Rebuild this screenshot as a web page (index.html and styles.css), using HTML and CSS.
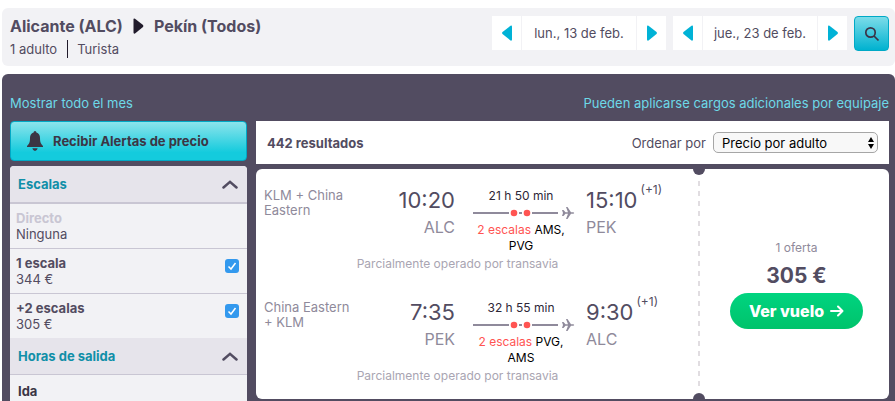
FILE: index.html
```html
<!DOCTYPE html>
<html lang="es">
<head>
<meta charset="utf-8">
<meta name="viewport" content="width=device-width, initial-scale=1">
<title>Alicante (ALC) – Pekín (Todos)</title>
<link rel="stylesheet" href="styles.css">
</head>
<body>
<header class="search">
  <div class="route">
    <h1 class="route-title">Alicante (ALC)
      <svg class="route-arrow" viewBox="0 0 10 16" aria-hidden="true"><path d="M0 1.5Q0 0 1.5 .8L9.5 7Q10.3 8 9.5 9L1.5 15.5Q0 16 0 14.5Z"/></svg>
      Pekín (Todos)</h1>
    <p class="route-info"><span>1 adulto</span><span class="cabin">Turista</span></p>
  </div>
  <div class="dates">
    <div class="date">
      <button class="step" type="button" aria-label="Día anterior"><svg viewBox="0 0 10 16"><path d="M10 1.5Q10 0 8.5 .8L.5 7Q-.3 8 .5 9L8.5 15.5Q10 16 10 14.5Z"/></svg></button>
      <button class="day" type="button">lun., 13 de feb.</button>
      <button class="step" type="button" aria-label="Día siguiente"><svg viewBox="0 0 10 16"><path d="M0 1.5Q0 0 1.5 .8L9.5 7Q10.3 8 9.5 9L1.5 15.5Q0 16 0 14.5Z"/></svg></button>
    </div>
    <div class="date">
      <button class="step" type="button" aria-label="Día anterior"><svg viewBox="0 0 10 16"><path d="M10 1.5Q10 0 8.5 .8L.5 7Q-.3 8 .5 9L8.5 15.5Q10 16 10 14.5Z"/></svg></button>
      <button class="day" type="button">jue., 23 de feb.</button>
      <button class="step" type="button" aria-label="Día siguiente"><svg viewBox="0 0 10 16"><path d="M0 1.5Q0 0 1.5 .8L9.5 7Q10.3 8 9.5 9L1.5 15.5Q0 16 0 14.5Z"/></svg></button>
    </div>
    <button class="find" type="button" aria-label="Buscar"><svg viewBox="0 0 16 16"><circle cx="6.5" cy="6.5" r="4.7"/><path d="M10 10L14.500 14.500"/></svg></button>
  </div>
</header>

<main class="page">
  <nav class="links">
    <a href="#mes">Mostrar todo el mes</a>
    <a href="#equipaje">Pueden aplicarse cargos adicionales por equipaje</a>
  </nav>
  <div class="columns">
    <aside class="sidebar">
      <button class="alerts" type="button">
        <svg viewBox="0 0 18 20" aria-hidden="true"><path d="M9 0Q10.400 0 10.400 1.600Q14 2.700 14 7C14 11.500 15 13.200 17 15V16H1V15C3 13.200 4 11.500 4 7Q4 2.700 7.600 1.600Q7.600 0 9 0Z"/><path d="M6.300 17.300H11.700Q11 20 9 20Q7 20 6.300 17.300Z"/></svg>
        Recibir Alertas de precio
      </button>
      <div class="filters">
        <button class="filter-head" type="button">Escalas <svg viewBox="0 0 16 9" aria-hidden="true"><path d="M1.500 7.500L8 1.800L14.500 7.500"/></svg></button>
        <div class="option"><div><b class="off">Directo</b><span>Ninguna</span></div></div>
        <label class="option" for="one"><span class="text"><b>1 escala</b><span>344 €</span></span><input id="one" type="checkbox" checked></label>
        <label class="option" for="two"><span class="text"><b>+2 escalas</b><span>305 €</span></span><input id="two" type="checkbox" checked></label>
        <button class="filter-head" type="button">Horas de salida <svg viewBox="0 0 16 9" aria-hidden="true"><path d="M1.500 7.500L8 1.800L14.500 7.500"/></svg></button>
        <h3 class="leg-name">Ida</h3>
      </div>
    </aside>

    <section class="results">
      <div class="toolbar">
        <strong>442 resultados</strong>
        <div class="sort">
          <label for="sort">Ordenar por</label>
          <div class="select">
            <select id="sort"><option>Precio por adulto</option></select>
            <svg viewBox="0 0 6 12" aria-hidden="true"><path d="M3 0L6 5H0ZM0 7H6L3 12Z"/></svg>
          </div>
        </div>
      </div>

      <article class="card">
        <div class="legs">
          <div class="leg">
            <div class="leg-main">
              <p class="airline">KLM + China Eastern</p>
              <p class="depart"><time>10:20</time><span>ALC</span></p>
              <div class="trip">
                <p class="duration">21 h 50 min</p>
                <svg class="track" viewBox="0 0 102 16" aria-hidden="true"><path class="line" d="M0 8H36M46 8H49M59 8H85"/><circle cx="41" cy="8" r="3.300"/><circle cx="54" cy="8" r="3.300"/><path class="plane" d="M89 5H90.500L92.500 7.200H95L93 2H94.500L98 7.200H100.500Q102 8 100.500 8.800H98L94.500 14H93L95 8.800H92.500L90.500 11H89L90 8Z"/></svg>
                <p class="stops"><span>2 escalas</span> AMS, PVG</p>
              </div>
              <p class="arrive"><time>15:10<sup>(+1)</sup></time><span>PEK</span></p>
            </div>
            <p class="operator">Parcialmente operado por transavia</p>
          </div>
          <div class="leg">
            <div class="leg-main">
              <p class="airline">China Eastern + KLM</p>
              <p class="depart"><time>7:35</time><span>PEK</span></p>
              <div class="trip">
                <p class="duration">32 h 55 min</p>
                <svg class="track" viewBox="0 0 102 16" aria-hidden="true"><path class="line" d="M0 8H36M46 8H49M59 8H85"/><circle cx="41" cy="8" r="3.300"/><circle cx="54" cy="8" r="3.300"/><path class="plane" d="M89 5H90.500L92.500 7.200H95L93 2H94.500L98 7.200H100.500Q102 8 100.500 8.800H98L94.500 14H93L95 8.800H92.500L90.500 11H89L90 8Z"/></svg>
                <p class="stops"><span>2 escalas</span> PVG, AMS</p>
              </div>
              <p class="arrive"><time>9:30<sup>(+1)</sup></time><span>ALC</span></p>
            </div>
            <p class="operator">Parcialmente operado por transavia</p>
          </div>
        </div>
        <div class="offer">
          <p class="count">1 oferta</p>
          <p class="price">305 €</p>
          <a class="go" href="#vuelo">Ver vuelo <svg viewBox="0 0 14 12" aria-hidden="true"><path d="M1 6H12.500M8 1.500L12.500 6L8 10.500"/></svg></a>
        </div>
      </article>
    </section>
  </div>
</main>
</body>
</html>
```
FILE: styles.css
```css
* { box-sizing: border-box; }

body {
  margin: 0;
  padding: 8px 0 0 2px;
  min-height: 100vh;
  display: flex;
  flex-direction: column;
  gap: 8px;
  background: #fff;
  color: #524c61;
  font: 13px/16px Inter, "Liberation Sans", sans-serif;
}

h1, h3, p { margin: 0; }
button, select { font: inherit; color: inherit; border: 0; margin: 0; padding: 0; }
button { cursor: pointer; }
svg { display: block; flex: none; }

/* Search summary */
.search {
  display: flex;
  justify-content: space-between;
  padding: 8px 6px 8px 8px;
  border-radius: 6px;
  background: #f2f2f5;
}
.route-title {
  display: flex;
  align-items: center;
  gap: 10px;
  font-size: 16px;
  line-height: 20px;
  font-weight: 700;
}
.route-arrow { width: 11px; height: 16px; fill: #211b2b; }
.route-info { display: flex; margin-top: 4px; line-height: 18px; }
.cabin { margin-left: 10px; padding-left: 9px; border-left: 1px solid #211b2b; }

.dates { display: flex; gap: 7px; }
.date { display: flex; gap: 1px; height: 34px; }
.step, .day { background: #fff; }
.step { display: grid; place-items: center; width: 29px; }
.step svg { width: 10px; height: 16px; fill: #00b2d6; }
.day { width: 114px; }
.find {
  display: grid;
  place-items: center;
  width: 35px;
  height: 35px;
  border: 1px solid #00a9c6;
  border-radius: 4px;
  background: linear-gradient(#7cdce9, #00b2d0);
}
.find svg { width: 16px; height: 16px; fill: none; stroke: #3b3347; stroke-width: 1.700; }

/* Results page */
.page {
  flex: 1;
  padding: 21px 6px 0 8px;
  border-radius: 6px 6px 0 0;
  background: #524c61;
}
.links { display: flex; justify-content: space-between; margin-bottom: 10px; }
.links a { color: #6dd9e8; text-decoration: none; }
.columns { display: grid; grid-template-columns: 237px 1fr; gap: 9px; }

/* Sidebar */
.sidebar { display: flex; flex-direction: column; }
.alerts {
  display: flex;
  align-items: center;
  gap: 9px;
  width: 100%;
  height: 40px;
  padding-left: 15px;
  border: 1px solid #00a9c6;
  border-radius: 4px;
  background: linear-gradient(#8ce4ec, #14cbdd 80%);
  color: #3b3645;
  font-weight: 700;
}
.alerts svg { width: 18px; height: 20px; fill: #3b3645; }
.filters { flex: 1; margin-top: 5px; border-radius: 4px 4px 0 0; background: #f2f2f5; overflow: hidden; }
.filter-head {
  display: flex;
  align-items: center;
  justify-content: space-between;
  width: 100%;
  height: 38px;
  padding: 0 9px 0 8px;
  border-bottom: 2px solid #c9c6d3;
  background: #e6e4eb;
  color: #108fa8;
  font-weight: 700;
}
.option + .filter-head { height: 37px; border-bottom-width: 1px; }
.filter-head svg { width: 16px; height: 9px; fill: none; stroke: #524c61; stroke-width: 2.500; stroke-linecap: round; }
.option {
  display: flex;
  justify-content: space-between;
  padding: 6px 8px 6px 6px;
}
.option + .option { border-top: 1px solid #c9c6d3; }
.option b, .option b + span { display: block; }
.option b { font-weight: 700; }
.option .off { color: #c9c6d3; }
.option input {
  appearance: none;
  width: 14px;
  height: 14px;
  margin: 4px 0 0;
  border-radius: 3px;
  background: #3399ee url("data:image/svg+xml,%3Csvg xmlns='http://www.w3.org/2000/svg' viewBox='0 0 14 14'%3E%3Cpath d='M3.500 7.500L6 10L10.500 4' fill='none' stroke='white' stroke-width='1.500'/%3E%3C/svg%3E");
}
.leg-name { padding: 8px 8px 0; font-size: 13px; font-weight: 700; color: #3b3645; }

/* Toolbar */
.results { margin-bottom: 2px; }
.toolbar {
  display: flex;
  align-items: center;
  justify-content: space-between;
  height: 43px;
  padding: 0 11px;
  background: #fff;
}
.toolbar strong { font-weight: 700; }
.sort { display: flex; align-items: center; gap: 7px; }
.select { display: grid; align-items: center; }
.select select, .select svg { grid-area: 1 / 1; }
.select select {
  appearance: none;
  width: 165px;
  height: 21px;
  padding: 0 8px;
  border: 1px solid #a6a6a6;
  border-radius: 5px;
  background: #f8f8f8;
  color: #000;
}
.select svg { justify-self: end; width: 6px; height: 12px; margin-right: 4px; pointer-events: none; }

/* Ticket */
.card {
  position: relative;
  display: grid;
  grid-template-columns: 1fr 190px;
  margin-top: 5px;
  border-radius: 6px;
  background: #fff;
}
.legs { display: grid; gap: 28px; padding: 19px 8px 15px; }
.leg-main { display: grid; grid-template-columns: 97px 94px 102px 1fr; }
.airline { padding-right: 8px; color: #8f8a9b; line-height: 15px; }
.depart { text-align: right; }
.depart time, .arrive time { display: block; font-size: 22px; line-height: 24px; }
.depart span, .arrive span { color: #8f8a9b; font-size: 16px; line-height: 30px; }
.trip { margin: 0 -18px 0 18px; font-size: 12px; text-align: center; }
.duration, .stops { padding-right: 6px; }
.duration { color: #2d2637; }
.track { width: 102px; height: 18px; }
.line { stroke: #8f8a9b; stroke-width: 2; }
.track circle { fill: #ff5452; }
.plane { fill: #8f8a9b; }
.stops { color: #000; }
.stops span { color: #ff5452; }
.arrive { padding-left: 29px; }
.arrive sup { margin-left: 3px; font-size: 12px; line-height: 0; vertical-align: 14px; }
.operator { margin-top: 2px; padding-right: 40px; color: #a9a5b2; font-size: 12px; text-align: center; }

.offer {
  position: relative;
  display: flex;
  flex-direction: column;
  align-items: center;
  padding: 71px 0 0 5px;
}
.offer::before {
  content: "";
  position: absolute;
  top: 12px;
  bottom: 12px;
  left: -1px;
  width: 2px;
  background: repeating-linear-gradient(#e1dde1 0 5px, transparent 5px 10px);
}
.card::before, .card::after {
  content: "";
  position: absolute;
  right: 184px;
  width: 12px;
  height: 6px;
  background: #524c61;
}
.card::before { top: 0; border-radius: 0 0 6px 6px; }
.card::after { bottom: 0; border-radius: 6px 6px 0 0; }
.count { color: #8f8a9b; font-size: 12px; }
.price { margin-top: 4px; font-size: 21px; line-height: 32px; font-weight: 700; }
.go {
  display: flex;
  align-items: center;
  gap: 6px;
  height: 36px;
  margin-top: 1px;
  padding: 0 19px;
  border-radius: 18px;
  background: linear-gradient(#00d480, #00c36b);
  color: #fff;
  font-size: 16px;
  font-weight: 800;
  text-decoration: none;
}
.go svg { width: 14px; height: 12px; fill: none; stroke: #fff; stroke-width: 2; stroke-linecap: round; stroke-linejoin: round; }
```
